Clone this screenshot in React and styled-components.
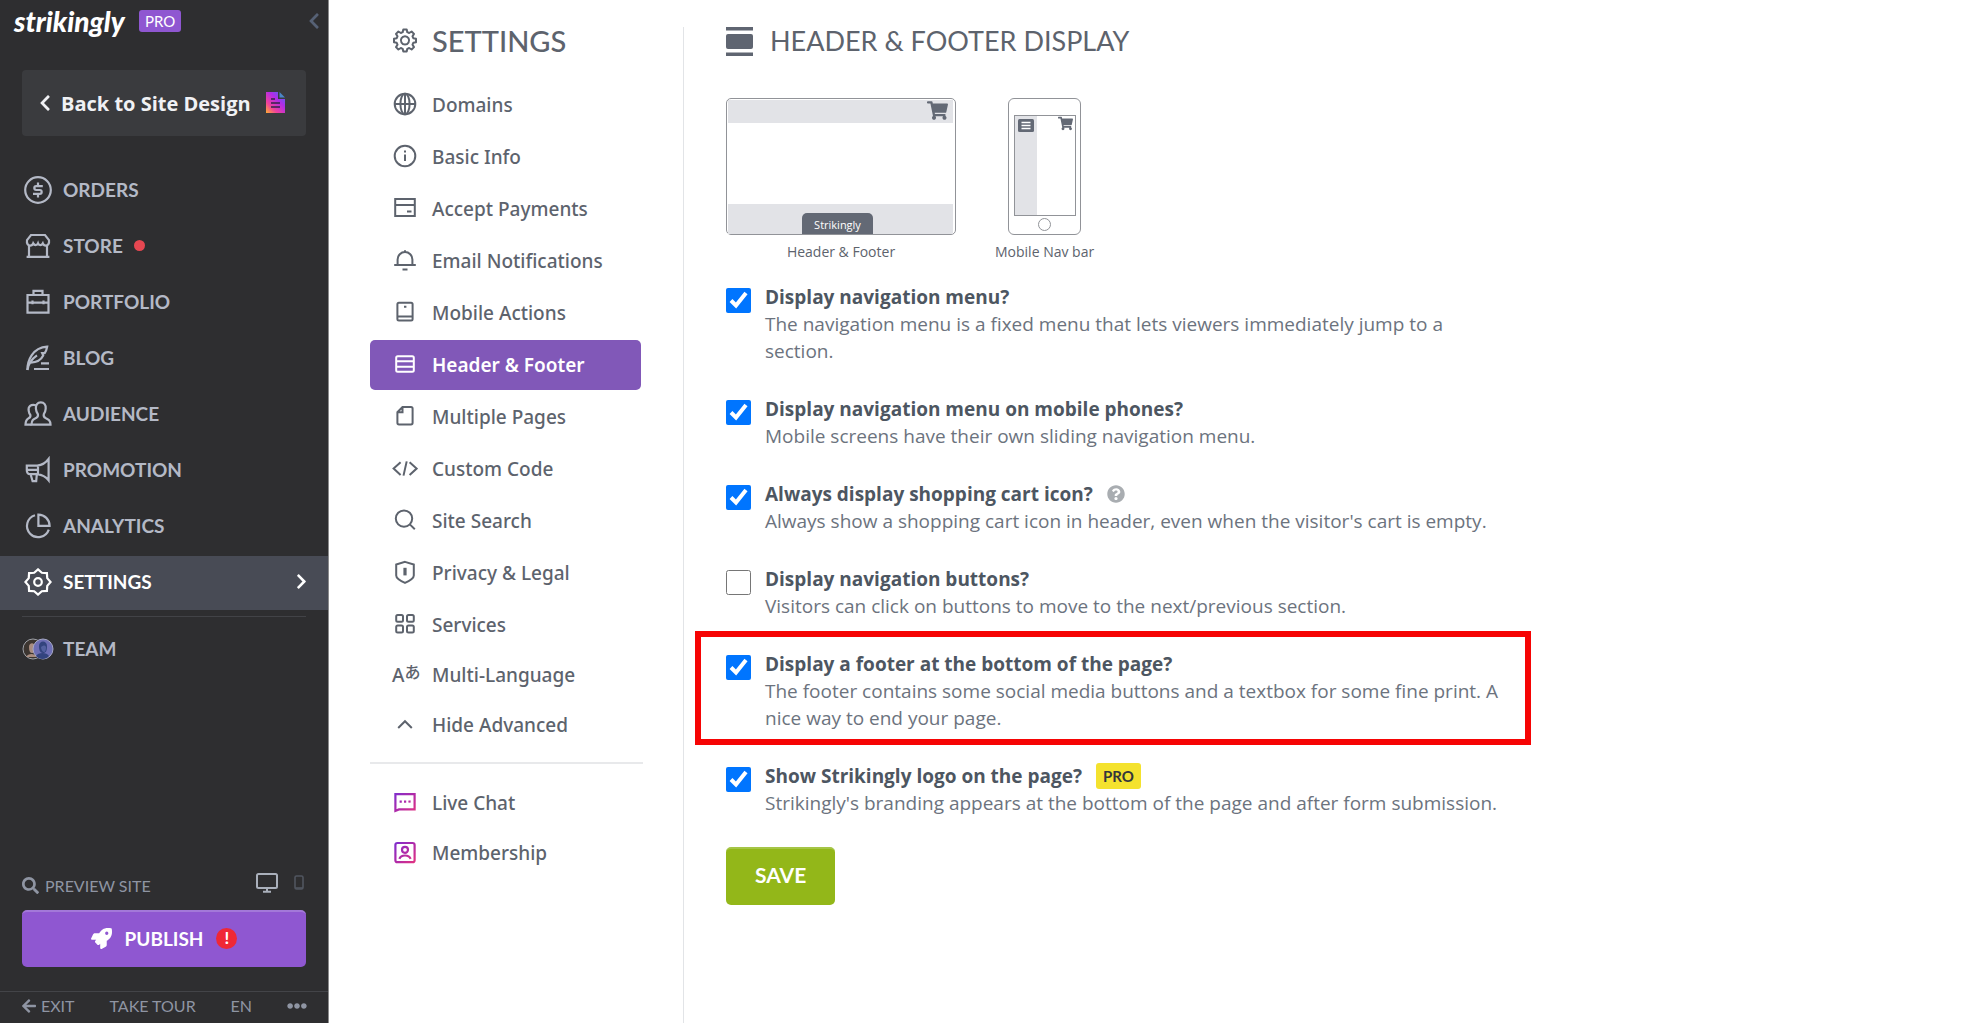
import React, { useState } from 'react';
import styled, { createGlobalStyle, css } from 'styled-components';
import {
  FaArrowLeft,
  FaChevronLeft,
  FaChevronRight,
  FaEllipsisH,
  FaQuestionCircle,
  FaRocket,
  FaSearch,
  FaShoppingCart
} from 'react-icons/fa';

const brandFont = 'Lato, "Open Sans", sans-serif';
const bodyFont = '"Open Sans", "Noto Sans", sans-serif';

const GlobalStyle = createGlobalStyle`
  * {
    box-sizing: border-box;
  }
  body {
    margin: 0;
    background: #fff;
    color: #5d636d;
    font-family: ${bodyFont};
  }
  button {
    font-family: inherit;
    cursor: pointer;
  }
`;

const Page = styled.div`
  display: flex;
  align-items: stretch;
  min-height: 100vh;
`;

/* ---------- sidebar ---------- */

const Sidebar = styled.aside`
  display: flex;
  flex-direction: column;
  flex: none;
  width: 329px;
  background: #2e2e30;
  border-right: 1px solid #8b8b8c;
  color: #b4b9c6;
  font-family: ${brandFont};
`;

const Brand = styled.header`
  display: flex;
  align-items: center;
  height: 42px;
  padding: 0 5px 0 14px;
`;

const Logo = styled.span`
  flex: none;
  width: 125px;
  color: #fff;
  font-size: 28px;
  font-style: italic;
  font-weight: 900;
  line-height: 40px;
`;

const Plan = styled.span`
  padding: 0 6px;
  border-radius: 3px;
  background: #8f57d1;
  color: #fff;
  font-size: 15px;
  line-height: 22px;
`;

const Collapse = styled.button`
  display: flex;
  margin-left: auto;
  padding: 0;
  border: 0;
  background: none;
  color: #566175;
`;

const BackButton = styled.button`
  display: flex;
  align-items: center;
  height: 66px;
  margin: 28px 22px;
  padding: 0 20px 0 14px;
  border: 0;
  border-radius: 4px;
  background: #3a3b3e;
  color: #f0f1f4;
  font-family: ${bodyFont};
  font-size: 20px;
  font-weight: 700;
`;

const BackText = styled.span`
  flex: 1;
  padding-left: 7px;
  text-align: left;
  white-space: nowrap;
`;

const NavList = styled.nav`
  display: flex;
  flex-direction: column;
  gap: 2px;
`;

const NavItem = styled.a`
  display: flex;
  align-items: center;
  gap: 11px;
  height: 54px;
  padding: 0 18px 3px 24px;
  color: inherit;
  font-size: 19px;
  font-weight: 700;
  text-decoration: none;
  ${props =>
    props.$active &&
    css`
      background: #484b55;
      color: #fff;
    `}
  svg:last-child:not(:first-child) {
    margin-left: auto;
  }
`;

const Dot = styled.span`
  width: 11px;
  height: 11px;
  border-radius: 50%;
  background: #e64751;
`;

const NavRule = styled.hr`
  width: calc(100% - 44px);
  margin: 6px 22px;
  border: 0;
  border-top: 1px solid #424347;
`;

const Bottom = styled.div`
  margin-top: auto;
`;

const PreviewBar = styled.div`
  display: flex;
  align-items: center;
  height: 40px;
  padding: 0 24px 0 22px;
  color: #8f95a3;
`;

const PreviewLink = styled.a`
  display: flex;
  align-items: center;
  gap: 6px;
  margin-right: auto;
  color: inherit;
  font-size: 16px;
  text-decoration: none;
`;

const DeviceButton = styled.button`
  display: flex;
  padding: 0 0 4px;
  margin-left: 16px;
  border: 0;
  background: none;
  color: ${props => (props.$dim ? '#50555f' : '#aab0bb')};
`;

const Publish = styled.button`
  display: flex;
  align-items: center;
  justify-content: center;
  gap: 13px;
  width: calc(100% - 44px);
  height: 57px;
  margin: 5px 22px 24px;
  padding-bottom: 3px;
  border: 0;
  border-top: 2px solid #a378d9;
  border-radius: 5px;
  background: #8f57d1;
  color: #fff;
  font-size: 19px;
  font-weight: 700;
`;

const Alert = styled.span`
  width: 21px;
  height: 21px;
  border-radius: 50%;
  background: #ef2836;
  font-size: 17px;
  line-height: 19px;
`;

const FootLinks = styled.footer`
  display: flex;
  align-items: center;
  justify-content: space-between;
  height: 32px;
  padding: 0 21px 4px;
  border-top: 1px solid #434448;
  color: #8f95a3;
  font-size: 16px;
`;

const FootLink = styled.a`
  display: flex;
  align-items: center;
  gap: 4px;
  color: inherit;
  text-decoration: none;
`;

/* ---------- settings menu ---------- */

const Menu = styled.aside`
  flex: none;
  width: 354px;
  padding: 16px 40px 0 41px;
`;

const MenuTitle = styled.h1`
  display: flex;
  align-items: center;
  gap: 14px;
  height: 50px;
  margin: 0 0 14px;
  padding: 0 0 2px 22px;
  font-family: ${brandFont};
  font-size: 29px;
  font-weight: 500;
`;

const MenuList = styled.nav`
  display: flex;
  flex-direction: column;
  gap: ${props => (props.$tight ? 0 : 2)}px;
`;

const MenuItem = styled.a`
  display: flex;
  align-items: center;
  gap: 14px;
  height: 50px;
  margin-right: 2px;
  padding-left: 22px;
  border-radius: 5px;
  color: ${props => (props.$active ? '#fff' : '#5d636d')};
  background: ${props => (props.$active ? '#8158b8' : 'none')};
  font-family: "Noto Sans", "Open Sans", sans-serif;
  font-size: 19px;
  font-weight: ${props => (props.$active ? 600 : 500)};
  text-decoration: none;
`;

const MenuRule = styled.hr`
  margin: 12px 0 14px;
  border: 0;
  border-top: 2px solid #e8e9eb;
`;

/* ---------- main ---------- */

const Main = styled.main`
  flex: 1;
  min-width: 0;
  margin-top: 27px;
  padding: 0 40px 40px 42px;
  border-left: 1px solid #e2e4e7;
`;

const Heading = styled.h2`
  display: flex;
  align-items: center;
  gap: 17px;
  height: 29px;
  margin: 0 0 42px;
  font-family: ${brandFont};
  font-size: 27px;
  font-weight: 400;
  line-height: 29px;
`;

const HeadingText = styled.span`
  padding-bottom: 3px;
`;

const Previews = styled.div`
  display: flex;
  gap: 39px;
  margin-bottom: 20px;
`;

const Figure = styled.figure`
  display: flex;
  flex-direction: column;
  align-items: center;
  margin: 0;
`;

const Caption = styled.figcaption`
  padding-top: 6px;
  font-size: 14px;
  line-height: 22px;
`;

const Desktop = styled.div`
  display: flex;
  flex-direction: column;
  justify-content: space-between;
  width: 230px;
  height: 137px;
  padding: 1px 2px 0 1px;
  border: 1px solid #919398;
  border-radius: 5px;
`;

const DesktopHeader = styled.div`
  display: flex;
  justify-content: flex-end;
  height: 23px;
  padding-right: 5px;
  background: #e2e3e7;
  color: #636975;
`;

const DesktopFooter = styled.div`
  display: flex;
  align-items: flex-end;
  justify-content: center;
  height: 30px;
  padding-right: 6px;
  background: #e2e3e7;
`;

const Tab = styled.span`
  width: 71px;
  height: 21px;
  padding-top: 2px;
  border-radius: 5px 5px 0 0;
  background: #636975;
  color: #fff;
  font-size: 11px;
  line-height: 19px;
  text-align: center;
`;

const Phone = styled.div`
  display: flex;
  flex-direction: column;
  align-items: center;
  gap: 2px;
  width: 73px;
  height: 137px;
  padding-top: 16px;
  border: 1px solid #919398;
  border-radius: 6px;
`;

const PhoneScreen = styled.div`
  display: flex;
  justify-content: space-between;
  width: 62px;
  height: 101px;
  padding-right: 2px;
  border: 1px solid #919398;
  color: #636975;
`;

const PhoneDrawer = styled.div`
  width: 22px;
  padding: 3px;
  background: #e2e3e7;
  svg {
    display: block;
  }
`;

const HomeButton = styled.span`
  width: 13px;
  height: 13px;
  border: 1px solid #919398;
  border-radius: 50%;
`;

const Option = styled.div`
  display: grid;
  grid-template-columns: 25px minmax(0, 748px);
  column-gap: 14px;
  align-items: start;
  justify-content: start;
  width: fit-content;
  margin-bottom: 30px;
  ${props =>
    props.$highlight &&
    css`
      position: relative;
      &::after {
        content: '';
        position: absolute;
        inset: -19px -18px -13px -31px;
        border: 6px solid #f60404;
        pointer-events: none;
      }
    `}
`;

const Checkbox = styled.input`
  width: 25px;
  height: 25px;
  margin: 5px 0 0;
`;

const OptionTitle = styled.div`
  display: flex;
  align-items: center;
  gap: 14px;
  height: 28px;
  color: #4d5661;
  font-size: 19px;
  font-weight: 700;
`;

const OptionText = styled.p`
  margin: 0;
  color: #6c737e;
  font-size: 19px;
  line-height: 27px;
`;

const Help = styled.button`
  display: flex;
  padding: 0;
  border: 0;
  background: none;
  color: #a9adb1;
`;

const ProTag = styled.span`
  padding: 0 7px;
  border-radius: 3px;
  background: #f4e22e;
  color: #33363b;
  font-family: ${brandFont};
  font-size: 15px;
  font-weight: 700;
  line-height: 26px;
`;

const Save = styled.button`
  height: 58px;
  padding: 0 29px 5px;
  border: 0;
  border-top: 2px solid #a5c546;
  border-radius: 5px;
  background: #93b719;
  color: #fff;
  font-family: ${brandFont};
  font-size: 21px;
  font-weight: 700;
`;

/* ---------- icons ---------- */

const NavSvg = styled.svg`
  flex: none;
  display: block;
  width: 28px;
  height: 28px;
  fill: none;
  stroke: currentColor;
  stroke-width: 2.2;
`;

const MenuSvg = styled.svg`
  flex: none;
  display: block;
  width: 26px;
  height: 26px;
  fill: none;
  stroke: ${props => (props.$gradient ? 'url(#pinkish)' : 'currentColor')};
  stroke-width: ${props => (props.$gradient ? 2.2 : 2)};
`;

const gearPoints = (outer, inner, c) =>
  Array.from({ length: 16 }, (_, i) => {
    const r = i % 2 ? inner : outer;
    const a = (i * Math.PI) / 8 - Math.PI / 2;
    return `${(c + r * Math.cos(a)).toFixed(2)},${(c + r * Math.sin(a)).toFixed(2)}`;
  }).join(' ');

const navIcons = {
  orders: (
    <>
      <circle cx="14" cy="14" r="12.8" />
      <path d="M18.8 10.2h-6.6a1.9 1.9 0 0 0 0 3.8h3.6a1.9 1.9 0 0 1 0 3.8H9M14 6.5v3.7M14 17.8v3.7" />
    </>
  ),
  store: (
    <>
      <path d="M7 3h14l4 5.2c.5 3.3-1 5.4-3.2 5.4-1.8 0-2.6-1.1-3-2.2-.9 1.5-1.8 1.7-2.4 1.7-1.3 0-2.1-.8-2.4-1.7-.4.9-1.2 1.7-2.4 1.7-.8 0-1.6-.3-2.4-1.7-.4 1.1-1.3 2.2-3 2.2-2.3 0-3.7-2.1-3.2-5.4z" />
      <path d="M5 13.6v11M23 13.6v11M2.6 24.8h22.8" />
    </>
  ),
  portfolio: (
    <path d="M3.5 7h21v17.6h-21zM9.5 7V2.8h9V7M3.5 14.6h21M8.5 12.4v3.8M19.5 12.4v3.8" />
  ),
  blog: (
    <>
      <path d="M3.4 26c0-9 4.6-22.4 19.8-23.4-.6 3.4-1.4 5.2-2.6 6.6h-2.400l1 2.200c-2.400 5-6.600 6.800-12.600 7.200" />
      <path d="M3.4 26c.8-5.6 4-10.800 9.600-14.600M17 19.400h8M10 25h15" />
    </>
  ),
  audience: (
    <>
      <path d="M16.8 2.4c3.4 0 5.2 2.6 4.9 6.2-.2 2.8-1.2 4.6-1.9 5.6-.5 2 .2 3 1.8 3.8 2.6 1.2 4.8 2 4.9 6.6h-19c.1-4.6 2-5.4 4.6-6.6 1.6-.8 2.2-1.8 1.8-3.8-.8-1-1.8-2.8-2-5.6-.2-3.6 1.5-6.2 4.9-6.2z" />
      <path d="M12 5.2C6.8 3.8 3.9 6.4 4.7 10.8c.3 2 .9 3.2 1.6 4 .6 2-.1 2.7-1.7 3.4-2 1-3 2.6-3.1 6.4h6" />
    </>
  ),
  promotion: (
    <path d="M2.8 9.6h10.4c5-.6 8.6-2.8 11.4-6.6v21.4c-3-3.8-6.6-5.6-11.4-6.2H6.4c-2.2 0-3.6-1.6-3.6-4zM14 9.6v8.6M3 13.8h11M6.6 18.2l2 7h3.6l.6-6.6" />
  ),
  analytics: (
    <>
      <path d="M11 3.2A11.2 11.2 0 1 0 24.8 17.6" />
      <path d="M14.4 2.6v11.2h11.2A11.2 11.2 0 0 0 14.4 2.6z" />
    </>
  ),
  settings: (
    <>
      <polygon points={gearPoints(12.6, 10, 14)} />
      <circle cx="14" cy="14" r="3.8" />
    </>
  )
};

const menuIcons = {
  gear: (
    <path
      d="M11.3 2.5h3.4l.6 2.7 1.9.8 2.4-1.5 2.4 2.4-1.5 2.4.8 1.9 2.7.6v3.4l-2.7.6-.8 1.9 1.5 2.4-2.4 2.4-2.4-1.5-1.9.8-.6 2.7h-3.4l-.6-2.7-1.9-.8-2.4 1.5L4 20.1l1.5-2.4-.8-1.9-2.7-.6v-3.4l2.7-.6.8-1.9L4 6.9l2.4-2.4L8.8 6l1.9-.8zM13 9.3a4.1 4.1 0 1 0 .01 0z"
      strokeLinejoin="round"
    />
  ),
  domains: (
    <>
      <circle cx="13" cy="12" r="10.3" />
      <ellipse cx="13" cy="12" rx="4.6" ry="10.3" />
      <path d="M2.7 12h20.6M13 1.7v20.6" />
    </>
  ),
  info: (
    <>
      <circle cx="13" cy="12" r="10.3" />
      <path d="M13 10.5v6.5M13 6.6v2" />
    </>
  ),
  payments: <path d="M3.2 3h19.6v17H3.2zM3.2 9h19.6M15 15.5h4.5" />,
  bell: <path d="M2.2 17h21.6M5.6 17v-5.6a7.4 7.4 0 0 1 14.8 0V17M10.5 21.5h5M12 3.2h2" />,
  mobile: (
    <>
      <rect x="5.4" y="2.8" width="15.2" height="17.6" rx="1.5" />
      <path d="M5.4 16.4h15.2M12 6.8h2.4" />
    </>
  ),
  header: (
    <>
      <rect x="4.2" y="4.2" width="17.6" height="15.6" rx="1.5" />
      <path d="M4.2 9.2h17.6M4.2 14.8h17.6" />
    </>
  ),
  pages: <path d="M10.5 3H19a1.6 1.6 0 0 1 1.6 1.6v14.2a1.6 1.6 0 0 1-1.6 1.6H7a1.6 1.6 0 0 1-1.6-1.6V8.2zM10.5 3v5.2H5.4" />,
  code: <path d="M8.6 6.2l-7 6.4 7 6.4M17.6 6.2l7 6.4-7 6.4M14.7 5.4l-3.2 14.2" />,
  search: (
    <>
      <circle cx="12" cy="10.6" r="8.2" />
      <path d="M17.8 16.4l5 4.8" />
    </>
  ),
  privacy: (
    <>
      <path d="M13 1.9l8.8 2.7v10.8c0 2.8-4.4 5.4-8.8 7.4-4.4-2-8.8-4.6-8.8-7.4V4.6z" />
      <path d="M13 7.8v7.6" strokeWidth="3.2" />
    </>
  ),
  services: (
    <>
      <rect x="4.2" y="3" width="6.8" height="6.8" rx="1.5" />
      <rect x="15" y="3" width="6.8" height="6.8" rx="1.5" />
      <rect x="4.2" y="13.6" width="6.8" height="6.8" rx="1.5" />
      <rect x="15" y="13.6" width="6.8" height="6.8" rx="1.5" />
    </>
  ),
  up: <path d="M6.2 16l6.8-6.8 6.8 6.8" />,
  chat: (
    <>
      <path d="M3.4 20.8V4.2h19.2v15.2H7z" />
      <path d="M7.6 11.6h2.2M12 11.6h2.2M16.4 11.5l2.2.2" />
    </>
  ),
  member: (
    <>
      <rect x="3.4" y="3" width="19.2" height="19.2" rx="2" />
      <circle cx="13" cy="9.8" r="3" />
      <path d="M7.4 18.8c1.6-4.4 9.6-4.4 11.2 0" />
    </>
  )
};

const LangMark = styled.span`
  display: flex;
  flex: none;
  align-items: flex-start;
  width: 26px;
  font-size: 19px;
  line-height: 26px;
  small {
    font-family: "Noto Sans CJK JP", sans-serif;
    font-size: 16px;
    line-height: 18px;
  }
`;

function MenuIcon({ name }) {
  if (name === 'language') {
    return (
      <LangMark aria-hidden="true">
        A<small>あ</small>
      </LangMark>
    );
  }
  return (
    <MenuSvg viewBox="0 0 26 26" $gradient={name === 'chat' || name === 'member'}>
      <defs>
        <linearGradient id="pinkish" gradientUnits="userSpaceOnUse" x1="2" y1="2" x2="24" y2="24">
          <stop offset="0" stopColor="#7b2fd0" />
          <stop offset="0.5" stopColor="#b02aa8" />
          <stop offset="1" stopColor="#e8357c" />
        </linearGradient>
      </defs>
      {menuIcons[name]}
    </MenuSvg>
  );
}

const DocIcon = () => (
  <svg width="20" height="22" viewBox="0 0 20 22">
    <defs>
      <linearGradient id="doc" x1="0" y1="1" x2="0.9" y2="0">
        <stop offset="0" stopColor="#ffb02e" />
        <stop offset="0.3" stopColor="#f0419c" />
        <stop offset="0.65" stopColor="#b12be8" />
        <stop offset="1" stopColor="#4a6cf0" />
      </linearGradient>
    </defs>
    <path d="M0 0h12v7h7v14H0z" fill="url(#doc)" />
    <path d="M13.5 0l5.5 5.5h-5.5z" fill="#4a86c8" />
    <path d="M5 7h4M5 11h9M5 15h9" stroke="#33234a" strokeWidth="1.6" />
  </svg>
);

const TeamIcon = () => (
  <svg width="32" height="22" viewBox="0 0 32 22">
    <circle cx="11" cy="11" r="10" fill="#3c3530" stroke="#9fa2a8" />
    <path d="M7 9c0-5 6-5 6 0s-1 6-3 6-3-2-3-6zM4 19c2-4 9-4 11 0z" fill="#a98d80" />
    <circle cx="21" cy="11" r="10" fill="#6e6fb5" stroke="#a6a8c4" />
    <path d="M17 8c0-6 8-6 8 0 0 5-1 7-4 7s-4-3-4-7zM14 18c2-4 11-4 13 0-3 4-10 4-13 0z" fill="#33447e" />
    <path d="M19 9c2-2 4-2 5 0 0 4-1 5-2 5s-3-2-3-5z" fill="#5361a0" />
  </svg>
);

const TeamItem = styled(NavItem)`
  gap: 9px;
  padding-left: 22px;
`;

const nav = [
  { id: 'orders', label: 'ORDERS' },
  { id: 'store', label: 'STORE', dot: true },
  { id: 'portfolio', label: 'PORTFOLIO' },
  { id: 'blog', label: 'BLOG' },
  { id: 'audience', label: 'AUDIENCE' },
  { id: 'promotion', label: 'PROMOTION' },
  { id: 'analytics', label: 'ANALYTICS' },
  { id: 'settings', label: 'SETTINGS', active: true }
];

const menu = [
  ['domains', 'Domains'],
  ['info', 'Basic Info'],
  ['payments', 'Accept Payments'],
  ['bell', 'Email Notifications'],
  ['mobile', 'Mobile Actions'],
  ['header', 'Header & Footer'],
  ['pages', 'Multiple Pages'],
  ['code', 'Custom Code'],
  ['search', 'Site Search'],
  ['privacy', 'Privacy & Legal'],
  ['services', 'Services']
];

const advanced = [
  ['language', 'Multi-Language'],
  ['up', 'Hide Advanced']
];

const support = [
  ['chat', 'Live Chat'],
  ['member', 'Membership']
];

const options = [
  {
    id: 'nav',
    title: 'Display navigation menu?',
    text: 'The navigation menu is a fixed menu that lets viewers immediately jump to a section.',
    checked: true
  },
  {
    id: 'mobile-nav',
    title: 'Display navigation menu on mobile phones?',
    text: 'Mobile screens have their own sliding navigation menu.',
    checked: true
  },
  {
    id: 'cart',
    title: 'Always display shopping cart icon?',
    text: "Always show a shopping cart icon in header, even when the visitor's cart is empty.",
    checked: true,
    help: true
  },
  {
    id: 'buttons',
    title: 'Display navigation buttons?',
    text: 'Visitors can click on buttons to move to the next/previous section.',
    checked: false
  },
  {
    id: 'footer',
    title: 'Display a footer at the bottom of the page?',
    text: 'The footer contains some social media buttons and a textbox for some fine print. A nice way to end your page.',
    checked: true,
    highlight: true
  },
  {
    id: 'logo',
    title: 'Show Strikingly logo on the page?',
    text: "Strikingly's branding appears at the bottom of the page and after form submission.",
    checked: true,
    pro: true
  }
];

function MenuGroup({ items, tight }) {
  return (
    <MenuList $tight={tight}>
      {items.map(([icon, label]) => (
        <MenuItem key={icon} href={`#${icon}`} $active={icon === 'header'}>
          <MenuIcon name={icon} />
          {label}
        </MenuItem>
      ))}
    </MenuList>
  );
}

function OptionRow({ option }) {
  const [checked, setChecked] = useState(option.checked);
  return (
    <Option $highlight={option.highlight}>
      <Checkbox
        type="checkbox"
        id={option.id}
        checked={checked}
        onChange={e => setChecked(e.target.checked)}
      />
      <div>
        <OptionTitle>
          <label htmlFor={option.id}>{option.title}</label>
          {option.help && (
            <Help type="button" aria-label="Help">
              <FaQuestionCircle size={18} />
            </Help>
          )}
          {option.pro && <ProTag>PRO</ProTag>}
        </OptionTitle>
        <OptionText>{option.text}</OptionText>
      </div>
    </Option>
  );
}

export default function App() {
  return (
    <Page>
      <GlobalStyle />
      <Sidebar>
        <Brand>
          <Logo>strikingly</Logo>
          <Plan>PRO</Plan>
          <Collapse type="button" aria-label="Collapse sidebar">
            <FaChevronLeft size={18} />
          </Collapse>
        </Brand>
        <BackButton type="button">
          <FaChevronLeft size={18} />
          <BackText>Back to Site Design</BackText>
          <DocIcon />
        </BackButton>
        <NavList>
          {nav.map(item => (
            <NavItem key={item.id} href={`#${item.id}`} $active={item.active}>
              <NavSvg viewBox="0 0 28 28">{navIcons[item.id]}</NavSvg>
              <span>{item.label}</span>
              {item.dot && <Dot />}
              {item.active && <FaChevronRight size={17} />}
            </NavItem>
          ))}
        </NavList>
        <NavRule />
        <TeamItem href="#team">
          <TeamIcon />
          <span>TEAM</span>
        </TeamItem>
        <Bottom>
          <PreviewBar>
            <PreviewLink href="#preview">
              <FaSearch size={17} />
              PREVIEW SITE
            </PreviewLink>
            <DeviceButton type="button" aria-label="Desktop preview">
              <svg width="22" height="20" viewBox="0 0 22 20" fill="none" stroke="currentColor" strokeWidth="2">
                <rect x="1" y="1" width="20" height="14" rx="1.5" />
                <path d="M11 15v3M7 18.8h8" />
              </svg>
            </DeviceButton>
            <DeviceButton type="button" aria-label="Mobile preview" $dim>
              <svg width="10" height="16" viewBox="0 0 10 16" fill="none" stroke="currentColor" strokeWidth="1.6">
                <rect x="1" y="1" width="8" height="13" rx="1.5" />
                <path d="M1 13h8" />
              </svg>
            </DeviceButton>
          </PreviewBar>
          <Publish type="button">
            <FaRocket size={21} />
            PUBLISH
            <Alert>!</Alert>
          </Publish>
          <FootLinks>
            <FootLink href="#exit">
              <FaArrowLeft size={16} />
              EXIT
            </FootLink>
            <FootLink href="#tour">TAKE TOUR</FootLink>
            <FootLink href="#lang">EN</FootLink>
            <FootLink href="#more" aria-label="More">
              <FaEllipsisH size={20} />
            </FootLink>
          </FootLinks>
        </Bottom>
      </Sidebar>

      <Menu>
        <MenuTitle>
          <MenuIcon name="gear" />
          SETTINGS
        </MenuTitle>
        <MenuGroup items={menu} />
        <MenuGroup items={advanced} tight />
        <MenuRule />
        <MenuGroup items={support} tight />
      </Menu>

      <Main>
        <Heading>
          <svg width="27" height="29" viewBox="0 0 27 29" fill="#5f6571">
            <path d="M0 0h27v3.5H0zM0 25.5h27V29H0z" />
            <rect y="7" width="27" height="15" rx="2" />
          </svg>
          <HeadingText>HEADER &amp; FOOTER DISPLAY</HeadingText>
        </Heading>
        <Previews>
          <Figure>
            <Desktop>
              <DesktopHeader>
                <FaShoppingCart size={21} />
              </DesktopHeader>
              <DesktopFooter>
                <Tab>Strikingly</Tab>
              </DesktopFooter>
            </Desktop>
            <Caption>Header &amp; Footer</Caption>
          </Figure>
          <Figure>
            <Phone>
              <PhoneScreen>
                <PhoneDrawer>
                  <svg width="16" height="13" viewBox="0 0 16 13">
                    <rect width="16" height="13" rx="1.5" fill="#636975" />
                    <path d="M3.5 3.5h9M3.5 6.5h9M3.5 9.5h9" stroke="#fff" strokeWidth="1.4" />
                  </svg>
                </PhoneDrawer>
                <FaShoppingCart size={15} />
              </PhoneScreen>
              <HomeButton />
            </Phone>
            <Caption>Mobile Nav bar</Caption>
          </Figure>
        </Previews>
        {options.map(option => (
          <OptionRow key={option.id} option={option} />
        ))}
        <Save type="button">SAVE</Save>
      </Main>
    </Page>
  );
}
